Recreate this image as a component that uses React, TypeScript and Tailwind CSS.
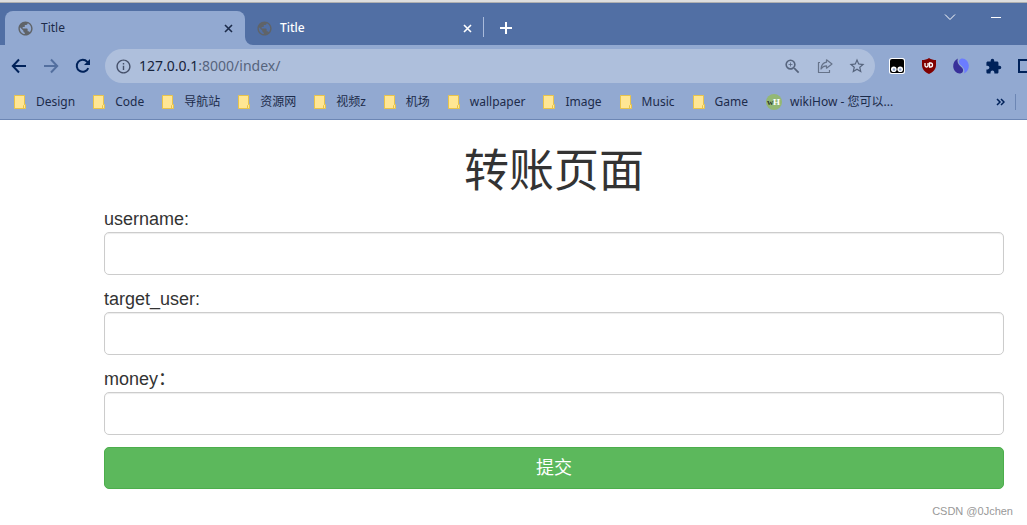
import React from "react";
import {
  MdExtension,
  MdInfoOutline,
  MdPublic,
  MdStarBorder,
  MdZoomIn,
} from "react-icons/md";

const BOOKMARKS = [
  "Design",
  "Code",
  "导航站",
  "资源网",
  "视频z",
  "机场",
  "wallpaper",
  "Image",
  "Music",
  "Game",
];

const FIELDS = [
  { id: "username", label: "username:" },
  { id: "target_user", label: "target_user:" },
  { id: "money", label: "money：" },
];

interface LineIconProps {
  d: string;
  size: number;
  strokeWidth?: number;
}

// 线条图标，坐标与像素一一对应
function LineIcon({ d, size, strokeWidth = 2 }: LineIconProps) {
  return (
    <svg
      width={size}
      height={size}
      viewBox={`0 0 ${size} ${size}`}
      fill="none"
      stroke="currentColor"
      strokeWidth={strokeWidth}
    >
      <path d={d} />
    </svg>
  );
}

function FolderIcon() {
  return (
    <svg width="12" height="14" viewBox="0 0 12 14" className="shrink-0">
      <path d="M.5.5h10v9h1v4h-11z" fill="#ffe694" stroke="#e8c34a" />
      <path d="M9.5 13V10.5l1-1" fill="none" stroke="#e8c34a" />
    </svg>
  );
}

function WikiHowIcon() {
  return (
    <svg width="16" height="16" viewBox="0 0 16 16" className="shrink-0">
      <circle cx="8" cy="8" r="8" fill="#93b874" />
      <text
        x="1"
        y="11"
        fontSize="9"
        fontWeight="bold"
        fontFamily="Liberation Serif, serif"
        fill="#2f3a2c"
      >
        w
      </text>
      <text
        x="7"
        y="11"
        fontSize="9"
        fontWeight="bold"
        fontFamily="Liberation Serif, serif"
        fill="#fff"
      >
        H
      </text>
    </svg>
  );
}

function ReloadIcon() {
  return (
    <svg width="16" height="16" viewBox="0 0 16 16">
      <path
        d="M13.300 10.200A6 6 0 1 1 12.300 3.900L14 5.600"
        fill="none"
        stroke="currentColor"
        strokeWidth="2"
      />
      <path d="M15 1v6H9z" fill="currentColor" />
    </svg>
  );
}

function ShareIcon() {
  return (
    <svg
      width="16"
      height="16"
      viewBox="0 0 16 16"
      fill="none"
      stroke="#66738a"
      strokeLinejoin="round"
      strokeWidth="1.200"
    >
      <path d="M3 4.500H1.500v10h11V12" />
      <path d="M9.500 1.800 15 6l-5.500 4.200V7.800C7 7.800 5.300 8.800 4 11c.3-3.800 2.300-6.300 5.500-6.800z" />
    </svg>
  );
}

function TampermonkeyIcon() {
  return (
    <svg width="16" height="16" viewBox="0 0 16 16">
      <rect width="16" height="16" rx="2.500" fill="#fff" />
      <rect x="1" y="1" width="14" height="14" rx="2" fill="#000" />
      <circle cx="4.800" cy="11.300" r="2.800" fill="#fff" />
      <circle cx="11.200" cy="11.300" r="2.800" fill="#fff" />
      <circle cx="5" cy="11.500" r="1.300" fill="#8ea4cd" />
      <circle cx="11.200" cy="11.500" r="1.300" fill="#8ea4cd" />
    </svg>
  );
}

function UblockIcon() {
  return (
    <svg width="16" height="16" viewBox="0 0 16 16">
      <path
        d="M8 0c2 1.500 4.500 2 7 2v5c0 4.500-3 7-7 9-4-2-7-4.500-7-9V2c2.500 0 5-.5 7-2z"
        fill="#800000"
      />
      <path
        d="M4 5v2.500a1.500 1.500 0 0 0 3 0V5M8.500 5v4h1a2 2 0 0 0 0-4z"
        fill="none"
        stroke="#fff"
        strokeWidth="1.300"
      />
    </svg>
  );
}

function SwirlIcon() {
  return (
    <svg width="16" height="16" viewBox="0 0 16 16">
      <path
        d="M4.800.5C1.800 2 0 5 .2 8.500.5 12.500 3.500 15.500 6.500 15.500c3 0 4.300-2.500 3.200-4.800C8.500 8.300 3.200 6.500 4.800.5z"
        fill="#38309a"
      />
      <path
        d="M11.200 15.500c3-1.500 4.800-4.500 4.600-8C15.500 3.500 12.500.5 9.500.5c-3 0-4.300 2.500-3.200 4.800C7.500 7.700 12.800 9.500 11.200 15.500z"
        fill="#6b7cff"
      />
    </svg>
  );
}

interface TabProps {
  active?: boolean;
}

function Tab({ active }: TabProps) {
  return (
    <div
      className={
        active
          ? "relative flex h-[34px] w-60 items-center rounded-t-lg bg-[#92a9d1] pr-3 pl-3 text-[#1c2b4a]"
          : "flex h-[34px] w-[238px] items-center pr-[11px] pl-[11px] text-white"
      }
    >
      <MdPublic size={17} color="#5f6368" />
      <span className={active ? "ml-[7px] flex-1" : "ml-[7px] flex-1 font-medium"}>
        Title
      </span>
      <button type="button" aria-label="关闭标签页">
        <LineIcon size={9} strokeWidth={1.6} d="M1 1l7 7M8 1l-7 7" />
      </button>
      {/* 标签底部的圆角 */}
      {active && (
        <svg
          width="8"
          height="8"
          viewBox="0 0 8 8"
          className="absolute bottom-0 left-full"
        >
          <path d="M0 0v8h8a8 8 0 0 1-8-8z" fill="#92a9d1" />
        </svg>
      )}
    </div>
  );
}

function TabBar() {
  return (
    <div className="flex h-[42px] items-end bg-[#516fa4] pl-[5px] text-xs">
      <Tab active />
      <Tab />
      <div className="mb-2 h-5 w-px bg-[#a9bbdb]" />
      <button type="button" aria-label="新标签页" className="mb-[11px] ml-4 text-white">
        <LineIcon size={12} d="M6 0v12M0 6h12" />
      </button>
      <div className="mr-[25px] ml-auto flex h-full items-start gap-[34px] pt-2 text-white">
        <button type="button" aria-label="搜索标签页">
          <LineIcon size={12} strokeWidth={1} d="M1 3.500l5 5 5-5" />
        </button>
        <button type="button" aria-label="最小化">
          <LineIcon size={12} strokeWidth={1} d="M1 6.500h10" />
        </button>
      </div>
    </div>
  );
}

function Toolbar() {
  return (
    <div className="flex h-[42px] items-center overflow-hidden bg-[#92a9d1] pl-[11px] text-[#00225a]">
      <div className="flex shrink-0 gap-4">
        <button type="button" aria-label="后退">
          <LineIcon size={16} d="M15 8H2.500M8 1.500 1.800 8 8 14.500" />
        </button>
        <button type="button" aria-label="前进" className="text-[#536f9f]">
          <LineIcon size={16} d="M1 8h12.500M8 1.500 14.200 8 8 14.500" />
        </button>
        <button type="button" aria-label="刷新">
          <ReloadIcon />
        </button>
      </div>
      <div className="ml-3.5 flex h-[34px] flex-1 items-center rounded-full bg-[#aebfdc] pr-[9px] pl-2.5 text-[#56647d]">
        <MdInfoOutline size={17} color="#45506a" />
        <div className="ml-[7px] flex-1 text-sm">
          <span className="text-[#17233b]">127.0.0.1</span>:8000/index/
        </div>
        <div className="flex items-center gap-[15px]">
          <MdZoomIn size={19} />
          <ShareIcon />
          <MdStarBorder size={18} />
        </div>
      </div>
      <div className="ml-3.5 flex shrink-0 items-center gap-4">
        <TampermonkeyIcon />
        <UblockIcon />
        <SwirlIcon />
        <MdExtension size={17} />
        <div className="h-3.5 w-[9px] border-2 border-r-0 border-[#00225a]" />
      </div>
    </div>
  );
}

function BookmarkBar() {
  return (
    <div className="flex h-[33px] items-center border-b border-[#6c86b4] bg-[#92a9d1] pr-[11px] pb-[3px] pl-3.5 text-xs whitespace-nowrap text-[#1c2b4a]">
      <nav className="flex flex-1 gap-[18px]">
        {BOOKMARKS.map((name) => (
          <a key={name} href="#" className="flex items-center gap-2.5">
            <FolderIcon />
            {name}
          </a>
        ))}
        <a href="#" className="flex items-center gap-2">
          <WikiHowIcon />
          wikiHow - 您可以...
        </a>
      </nav>
      <button type="button" aria-label="更多书签">
        <svg
          width="9"
          height="8"
          viewBox="0 0 9 8"
          fill="none"
          stroke="#00225a"
          strokeWidth="1.500"
        >
          <path d="M1 1l3 3-3 3M5 1l3 3-3 3" />
        </svg>
      </button>
      <div className="ml-2.5 h-4 w-px bg-[#6c86b4]" />
    </div>
  );
}

export default function App() {
  return (
    <div className="min-h-screen bg-white font-['Noto_Sans','Noto_Sans_CJK_SC',sans-serif]">
      <header>
        <div className="h-[3px] border-b border-[#b0b0b0] bg-[#dedede]" />
        <TabBar />
        <Toolbar />
        <BookmarkBar />
      </header>

      <main className="mr-[23px] ml-[104px] font-['Liberation_Sans','Noto_Sans_CJK_SC',sans-serif] text-[#333]">
        <h1 className="pt-[26px] pb-2.5 text-center text-[45px] leading-[51px]">
          转账页面
        </h1>
        <form onSubmit={(e) => e.preventDefault()}>
          {FIELDS.map(({ id, label }) => (
            <div key={id} className="mb-3">
              <label htmlFor={id} className="block h-[25px] text-lg leading-[25px]">
                {label}
              </label>
              <input
                id={id}
                type="text"
                className="block h-[43px] w-full rounded-[5px] border border-[#ccc] px-4 text-lg shadow-[inset_0_1px_1px_rgba(0,0,0,0.075)]"
              />
            </div>
          ))}
          <button
            type="submit"
            className="block h-[42px] w-full rounded-[5px] border border-[#4cae4c] bg-[#5cb85c] text-lg leading-[25px] text-white"
          >
            提交
          </button>
        </form>
      </main>

      <footer className="mt-3.5 mr-3.5 text-right font-['Liberation_Sans',sans-serif] text-[11px] leading-4 text-[#999]">
        CSDN @0Jchen
      </footer>
    </div>
  );
}
